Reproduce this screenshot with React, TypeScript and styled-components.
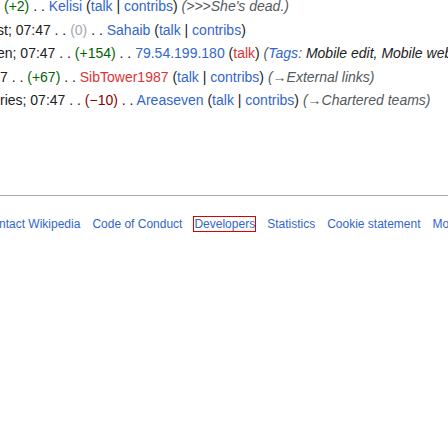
import React from "react";
import styled, { createGlobalStyle } from "styled-components";

const Global = createGlobalStyle`
  html { margin: 0; padding: 0; overflow: hidden; }
  body { margin: 0; padding: 0; background: #fff; font-family: "Liberation Sans", Arial, sans-serif; color: #202122; }
`;

const Page = styled.div`
  width: 448px;
  height: 448px;
  overflow: hidden;
  display: flex;
  flex-direction: column;
`;

const List = styled.ul`
  list-style: none;
  margin: -5px 0 0 0;
  padding: 0;
  font-size: 14px;
  line-height: 23.6px;
`;

const Row = styled.li<{ $indent?: number }>`
  white-space: nowrap;
  overflow: hidden;
  text-indent: ${(p) => p.$indent ?? 0}px;
`;

const A = styled.span<{ $red?: boolean }>`
  color: ${(p) => (p.$red ? "#d33" : "#36c")};
`;

const Diff = styled.span<{ $kind: "pos" | "neg" | "null" }>`
  color: ${(p) => (p.$kind === "pos" ? "#006400" : p.$kind === "neg" ? "#8b0000" : "#a2a9b1")};
`;

const Comment = styled.span`
  font-style: italic;
  color: #54595d;
`;

const Plain = styled.span`
  color: #202122;
`;

const Footer = styled.div`
  margin-top: 82px;
  border-top: 1px solid #a2a9b1;
  padding-top: 20px;
  overflow: hidden;
`;

const FooterList = styled.ul`
  list-style: none;
  margin: 0 0 0 -1px;
  padding: 0;
  display: flex;
  gap: 12px;
  font-size: 12px;
  line-height: 16px;
  white-space: nowrap;
`;

const FooterItem = styled.li`
  flex: none;
`;

const FooterLink = styled.span<{ $focus?: boolean }>`
  color: #36c;
  ${(p) => (p.$focus ? "outline: 1px solid #d00; outline-offset: 0px;" : "")}
`;

const footerLinks = [
  "ntact Wikipedia",
  "Code of Conduct",
  "Developers",
  "Statistics",
  "Cookie statement",
  "Mobile view",
];

export default function App() {
  return (
    <Page>
      <Global />
      <List>
        <Row $indent={4}>
          <Diff $kind="pos">(+2)</Diff> . . <A>Kelisi</A> (<A>talk</A> | <A>contribs</A>){" "}
          <Comment>(&gt;&gt;&gt;She's dead.)</Comment>
        </Row>
        <Row $indent={-3}>
          st; 07:47 . . <Diff $kind="null">(0)</Diff> . . <A>Sahaib</A> (<A>talk</A> | <A>contribs</A>)
        </Row>
        <Row $indent={-3}>
          en; 07:47 . . <Diff $kind="pos">(+154)</Diff> . . <A>79.54.199.180</A> (<A $red>talk</A>){" "}
          <Comment>
            (<A>Tags</A>: <Plain>Mobile edit, Mobile web edit</Plain>)
          </Comment>
        </Row>
        <Row>
          7 . . <Diff $kind="pos">(+67)</Diff> . . <A $red>SibTower1987</A> (<A>talk</A> | <A>contribs</A>){" "}
          <Comment>(→External links)</Comment>
        </Row>
        <Row>
          ries; 07:47 . . <Diff $kind="neg">(−10)</Diff> . . <A>Areaseven</A> (<A>talk</A> | <A>contribs</A>){" "}
          <Comment>(→Chartered teams)</Comment>
        </Row>
      </List>
      <Footer>
        <FooterList>
          {footerLinks.map((l) => (
            <FooterItem key={l}>
              <FooterLink $focus={l === "Developers"}>{l}</FooterLink>
            </FooterItem>
          ))}
        </FooterList>
      </Footer>
    </Page>
  );
}
